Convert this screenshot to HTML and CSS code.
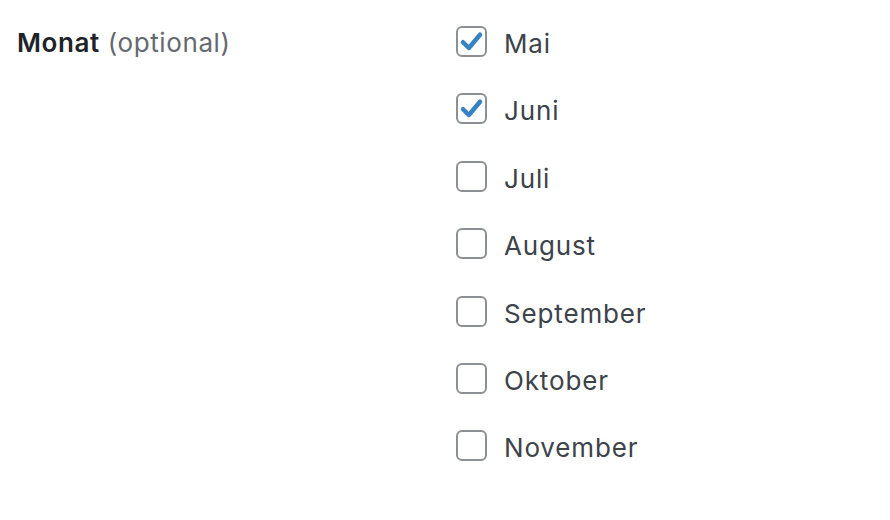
FILE: index.html
```html
<!DOCTYPE html>
<html lang="de">
<head>
<meta charset="utf-8">
<link rel="stylesheet" href="styles.css">
</head>
<body>
<div class="field">
  <div class="label"><strong>Monat</strong> <span class="opt">(optional)</span></div>
  <div class="options">
    <label class="opt-row"><span class="box checked"><svg viewBox="0 0 20 20"><path d="M3.2 10.6 L7.9 15.2 L16.8 4.6" /></svg></span><span class="txt">Mai</span></label>
    <label class="opt-row"><span class="box checked"><svg viewBox="0 0 20 20"><path d="M3.2 10.6 L7.9 15.2 L16.8 4.6" /></svg></span><span class="txt">Juni</span></label>
    <label class="opt-row"><span class="box"></span><span class="txt">Juli</span></label>
    <label class="opt-row"><span class="box"></span><span class="txt">August</span></label>
    <label class="opt-row"><span class="box"></span><span class="txt">September</span></label>
    <label class="opt-row"><span class="box"></span><span class="txt">Oktober</span></label>
    <label class="opt-row"><span class="box"></span><span class="txt">November</span></label>
  </div>
</div>
</body>
</html>
```
FILE: styles.css
```css
html, body { margin: 0; padding: 0; background: #fff; }
body { font-family: Inter, "Noto Sans", sans-serif; color: #3c434a; width: 890px; height: 520px; overflow: hidden; }
.field { display: flex; padding: 26px 0 0 17px; }
.label { width: 439px; font-size: 26px; line-height: 32px; color: #646970; letter-spacing: 0.6px; padding-top: 1px; }
.label strong { color: #1d2327; font-weight: 600; }
.options { display: flex; flex-direction: column; gap: 36.4px; }
.opt-row { display: flex; align-items: center; height: 31px; }
.box { width: 31px; height: 31px; box-sizing: border-box; border: 2px solid #8c8f94; border-radius: 6px; background: #fff; display: flex; align-items: center; justify-content: center; flex: none; }
.box svg { width: 25px; height: 25px; fill: none; stroke: #3582c4; stroke-width: 3.6; stroke-linecap: round; stroke-linejoin: round; }
.txt { margin-left: 17px; margin-top: 4px; font-size: 26px; letter-spacing: 0.85px; color: #3c434a; line-height: 31px; }
```
